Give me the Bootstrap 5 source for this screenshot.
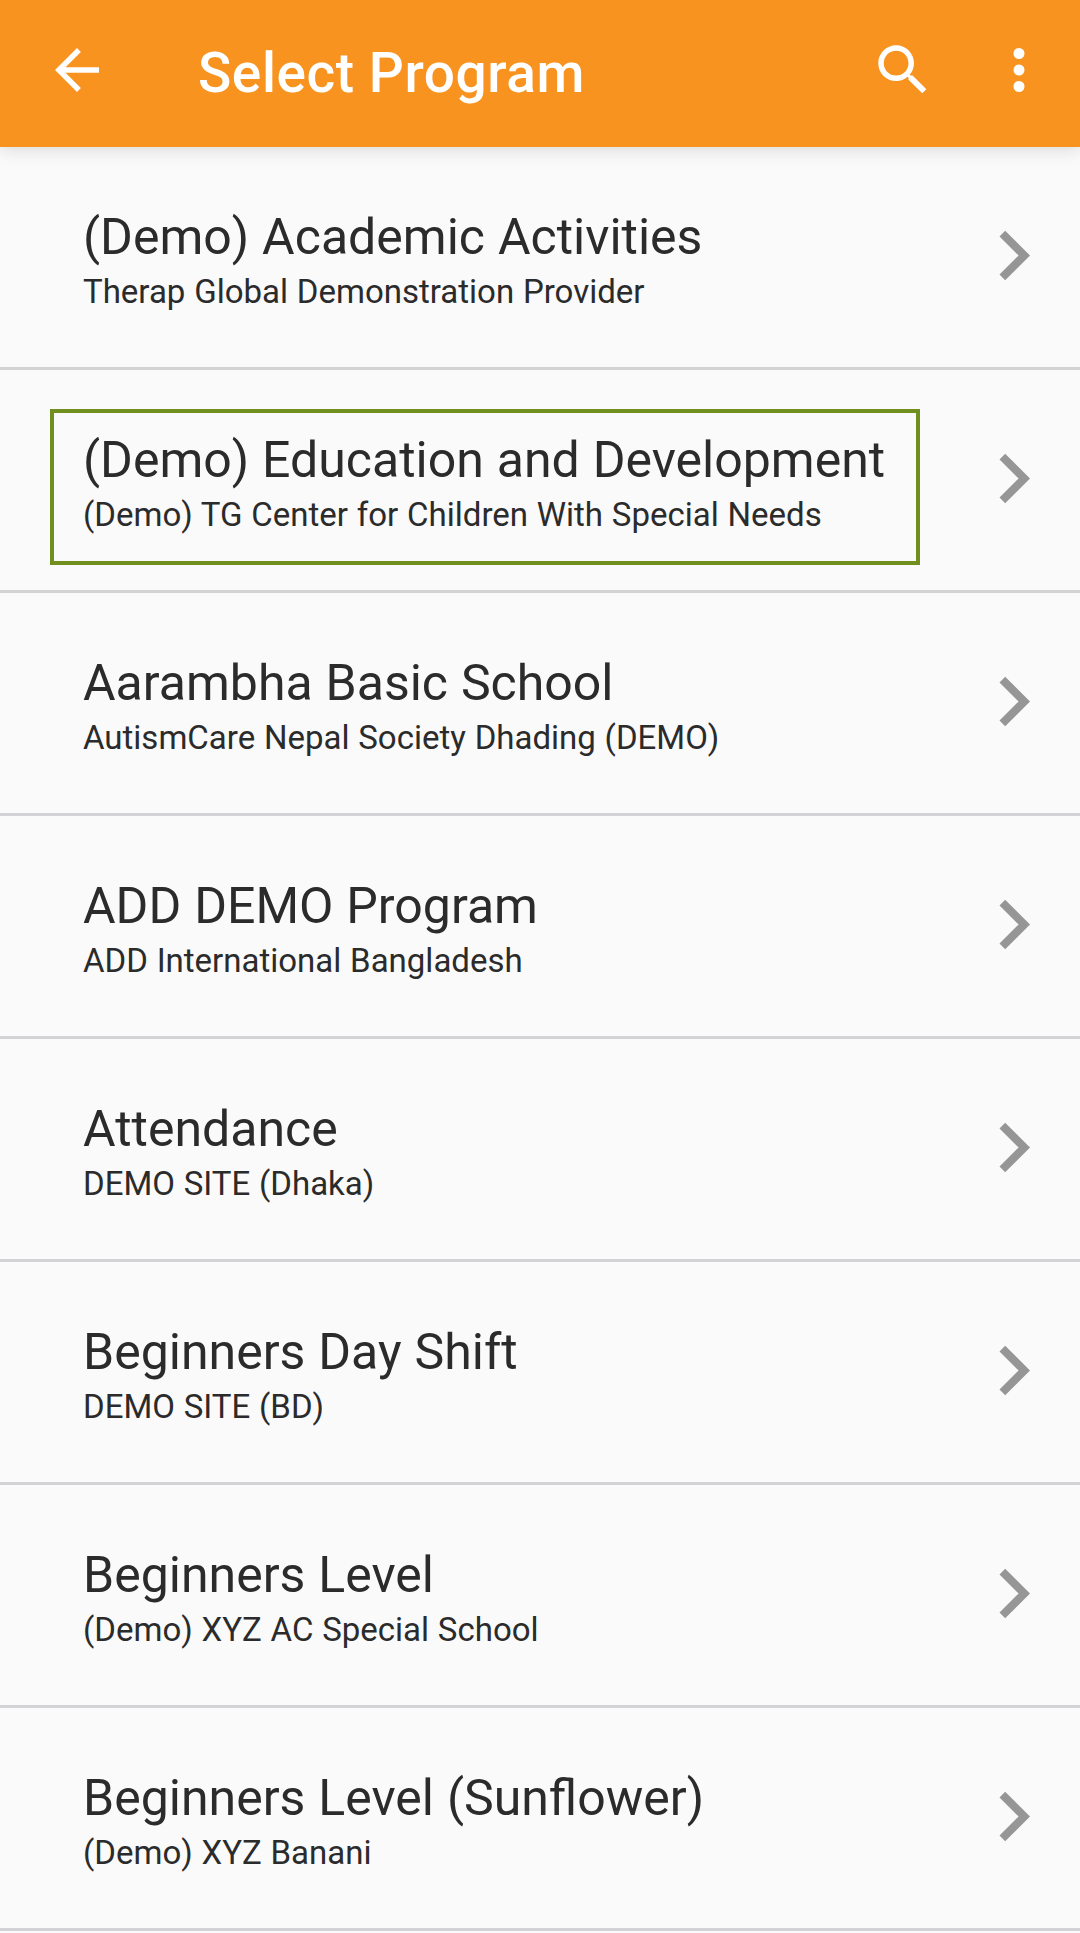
<!DOCTYPE html>
<html lang="en">
<head>
<meta charset="utf-8">
<meta name="viewport" content="width=device-width, initial-scale=1">
<title>Select Program</title>
<link href="https://cdn.jsdelivr.net/npm/bootstrap@5.3.0/dist/css/bootstrap.min.css" rel="stylesheet">
<style>
  body { background: #fafafa; color: #2b2b2b; font-family: Roboto, "Noto Sans", sans-serif; overflow: hidden; }
  .app-bar { height: 147px; background: #f7931e; padding: 0 28px 7px 44px; box-shadow: 0 3px 16px rgba(0,0,0,.13); z-index: 2; }
  .app-bar svg { width: 66px; height: 66px; fill: #fff; display: block; }
  .app-title { font-size: 55px; font-weight: 500; line-height: 64px; letter-spacing: .56px; margin: 5px 0 0 88px; }
  .overflow-btn { margin-left: 50px; }
  .list-group-flush > .program-row,
  .list-group-flush > .program-row:last-child { height: 223px; padding: 39px 49px 0 50px; background: transparent; border-width: 0 0 3px; border-color: #d3d3d6; color: inherit; }
  .program-text { width: 870px; height: 156px; border: 4px solid transparent; padding: 17px 0 0 29px; white-space: nowrap; }
  .program-text.is-marked { border-color: #708f1e; }
  .program-name { font-size: 50px; line-height: 60px; font-weight: 400; word-spacing: .5px; margin: 0; }
  .program-site { font-size: 33px; line-height: 40px; word-spacing: .6px; margin: 5px 0 0; }
  .chevron { width: 31px; height: 50px; margin-top: 44px; fill: #969696; overflow: visible; }
</style>
</head>
<body>
<header class="app-bar d-flex align-items-center position-relative text-white">
  <button class="btn p-0 border-0" aria-label="Back"><svg viewBox="0 0 24 24"><path d="M20 11H7.83l5.59-5.59L12 4l-8 8 8 8 1.41-1.41L7.83 13H20v-2z"/></svg></button>
  <h1 class="app-title">Select Program</h1>
  <button class="btn p-0 border-0 ms-auto" aria-label="Search"><svg viewBox="0 0 24 24"><path d="M15.5 14h-.79l-.28-.27C15.41 12.59 16 11.11 16 9.5 16 5.91 13.09 3 9.5 3S3 5.91 3 9.5 5.91 16 9.5 16c1.61 0 3.09-.59 4.23-1.57l.27.28v.79l5 4.99L20.49 19l-4.99-5zm-6 0C7.01 14 5 11.99 5 9.5S7.01 5 9.5 5 14 7.01 14 9.5 11.99 14 9.5 14z"/></svg></button>
  <button class="btn p-0 border-0 overflow-btn" aria-label="More options"><svg viewBox="0 0 24 24"><circle cx="12" cy="6" r="2"/><circle cx="12" cy="12" r="2"/><circle cx="12" cy="18" r="2"/></svg></button>
</header>
<svg class="d-none"><symbol id="chev" viewBox="0 0 31 50" overflow="visible"><path d="M-.5 6.4 5.2.7 30 25.5 5.2 50.3-.5 44.6 18.6 25.5z"/></symbol></svg>
<main class="list-group list-group-flush">
  <a class="list-group-item program-row d-flex justify-content-between align-items-start">
    <div class="program-text"><h2 class="program-name">(Demo) Academic Activities</h2><p class="program-site">Therap Global Demonstration Provider</p></div>
    <svg class="chevron"><use href="#chev"/></svg>
  </a>
  <a class="list-group-item program-row d-flex justify-content-between align-items-start">
    <div class="program-text is-marked"><h2 class="program-name">(Demo) Education and Development</h2><p class="program-site">(Demo) TG Center for Children With Special Needs</p></div>
    <svg class="chevron"><use href="#chev"/></svg>
  </a>
  <a class="list-group-item program-row d-flex justify-content-between align-items-start">
    <div class="program-text"><h2 class="program-name">Aarambha Basic School</h2><p class="program-site">AutismCare Nepal Society Dhading (DEMO)</p></div>
    <svg class="chevron"><use href="#chev"/></svg>
  </a>
  <a class="list-group-item program-row d-flex justify-content-between align-items-start">
    <div class="program-text"><h2 class="program-name">ADD DEMO Program</h2><p class="program-site">ADD International Bangladesh</p></div>
    <svg class="chevron"><use href="#chev"/></svg>
  </a>
  <a class="list-group-item program-row d-flex justify-content-between align-items-start">
    <div class="program-text"><h2 class="program-name">Attendance</h2><p class="program-site">DEMO SITE (Dhaka)</p></div>
    <svg class="chevron"><use href="#chev"/></svg>
  </a>
  <a class="list-group-item program-row d-flex justify-content-between align-items-start">
    <div class="program-text"><h2 class="program-name">Beginners Day Shift</h2><p class="program-site">DEMO SITE (BD)</p></div>
    <svg class="chevron"><use href="#chev"/></svg>
  </a>
  <a class="list-group-item program-row d-flex justify-content-between align-items-start">
    <div class="program-text"><h2 class="program-name">Beginners Level</h2><p class="program-site">(Demo) XYZ AC Special School</p></div>
    <svg class="chevron"><use href="#chev"/></svg>
  </a>
  <a class="list-group-item program-row d-flex justify-content-between align-items-start">
    <div class="program-text"><h2 class="program-name">Beginners Level (Sunflower)</h2><p class="program-site">(Demo) XYZ Banani</p></div>
    <svg class="chevron"><use href="#chev"/></svg>
  </a>
</main>
<script src="https://cdn.jsdelivr.net/npm/bootstrap@5.3.0/dist/js/bootstrap.bundle.min.js"></script>
</body>
</html>
